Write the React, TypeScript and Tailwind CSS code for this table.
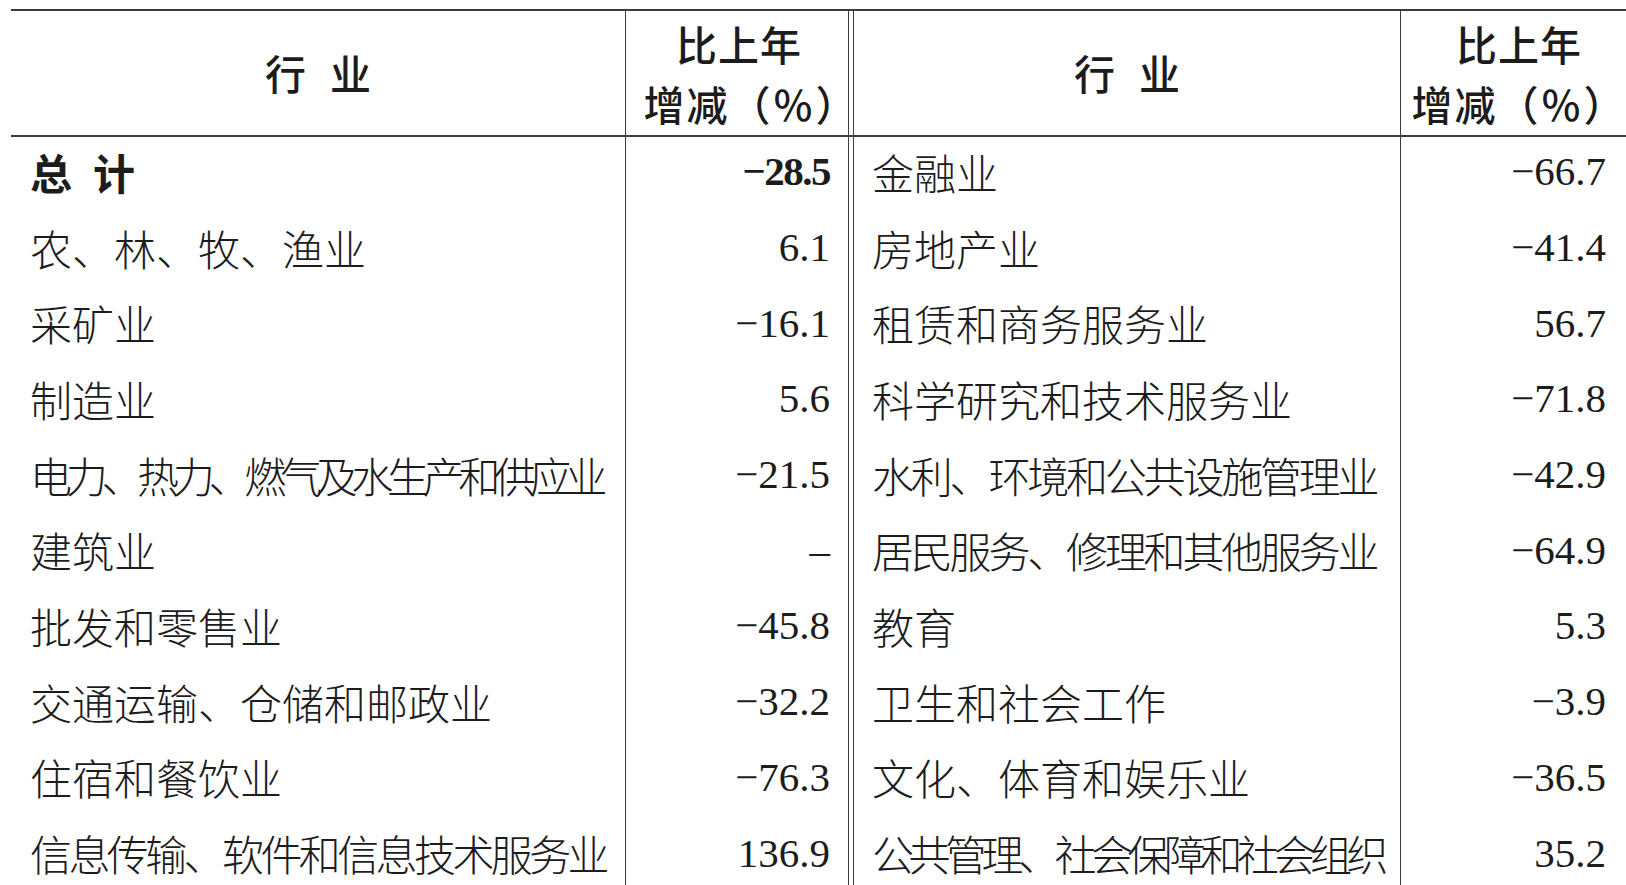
import { Fragment } from "react";

type Row = { name: string; value: string; bold?: boolean; squeeze?: string };

const leftRows: Row[] = [
  { name: "总 计", value: "−28.5", bold: true },
  { name: "农、林、牧、渔业", value: "6.1" },
  { name: "采矿业", value: "−16.1" },
  { name: "制造业", value: "5.6" },
  { name: "电力、热力、燃气及水生产和供应业", value: "−21.5", squeeze: "tracking-[-6.3px]" },
  { name: "建筑业", value: "–" },
  { name: "批发和零售业", value: "−45.8" },
  { name: "交通运输、仓储和邮政业", value: "−32.2" },
  { name: "住宿和餐饮业", value: "−76.3" },
  { name: "信息传输、软件和信息技术服务业", value: "136.9", squeeze: "tracking-[-3.6px]" },
];

const rightRows: Row[] = [
  { name: "金融业", value: "−66.7" },
  { name: "房地产业", value: "−41.4" },
  { name: "租赁和商务服务业", value: "56.7" },
  { name: "科学研究和技术服务业", value: "−71.8" },
  { name: "水利、环境和公共设施管理业", value: "−42.9", squeeze: "tracking-[-3.2px]" },
  { name: "居民服务、修理和其他服务业", value: "−64.9", squeeze: "tracking-[-3.2px]" },
  { name: "教育", value: "5.3" },
  { name: "卫生和社会工作", value: "−3.9" },
  { name: "文化、体育和娱乐业", value: "−36.5" },
  { name: "公共管理、社会保障和社会组织", value: "35.2", squeeze: "tracking-[-5.5px]" },
];

const cjk = "font-['Noto_Sans_CJK_SC',sans-serif]";
const num = "font-['Liberation_Serif','Noto_Sans_CJK_SC',serif]";

const Label = ({ row }: { row: Row }) => {
  if (row.name.includes(" ")) {
    // 总 计 is set with a wide gap
    return (
      <span className={`flex gap-[21px] ${row.bold ? "font-bold" : "font-light"}`}>
        {row.name.split(" ").map((c) => (
          <span key={c}>{c}</span>
        ))}
      </span>
    );
  }
  return (
    <span className={`whitespace-nowrap font-light ${row.squeeze ?? ""}`}>{row.name}</span>
  );
};

const HeaderName = () => (
  <div className="flex gap-[24px] font-medium text-[41px]">
    <span>行</span>
    <span>业</span>
  </div>
);

const HeaderChange = ({ edge }: { edge?: boolean }) => (
  <div className="flex flex-col items-center leading-[60px] font-medium">
    <span className="tracking-[1px] pl-[4px]">比上年</span>
    <span className={`whitespace-nowrap tracking-[2px] ${edge ? "pl-[4px]" : "pl-[28px]"}`}>增减（％）</span>
  </div>
);

export default function App() {
  return (
    <div className={`w-[1626px] h-[885px] overflow-hidden bg-white text-[#1c1c1c] ${cjk}`}>
      <div className="pt-[9px] pl-[11px] w-[1640px]">
        <div className="border-t-2 border-b-2 border-[#3c3c3c] flex h-[128px] text-[41px]">
          <div className="w-[615px] border-r border-[#3c3c3c] flex items-center justify-center">
            <HeaderName />
          </div>
          <div className="w-[223px] border-r border-[#3c3c3c] flex items-center justify-center">
            <HeaderChange />
          </div>
          <div className="w-[548px] ml-[4px] border-l border-r border-[#3c3c3c] flex items-center justify-center">
            <HeaderName />
          </div>
          <div className="w-[232px] flex items-center justify-center">
            <HeaderChange edge />
          </div>
        </div>
        <div className="flex flex-col">
          {leftRows.map((l, i) => {
            const r = rightRows[i];
            return (
              <Fragment key={l.name}>
                <div className="flex h-[75.7px] text-[42px] leading-none">
                  <div className="w-[615px] border-r border-[#3c3c3c] flex items-center pl-[19px] pb-[6px]">
                    <Label row={l} />
                  </div>
                  <div
                    className={`w-[223px] border-r border-[#3c3c3c] flex items-center justify-end pr-[18px] pb-[6px] text-[41px] ${num} ${
                      l.bold ? "font-bold tracking-[-1.5px]" : ""
                    }`}
                  >
                    {l.value}
                  </div>
                  <div className="w-[548px] ml-[4px] border-l border-r border-[#3c3c3c] flex items-center pl-[18px] pb-[6px]">
                    <Label row={r} />
                  </div>
                  <div className={`w-[232px] flex items-center justify-end pr-[27px] pb-[6px] text-[41px] ${num}`}>
                    {r.value}
                  </div>
                </div>
              </Fragment>
            );
          })}
        </div>
      </div>
    </div>
  );
}
